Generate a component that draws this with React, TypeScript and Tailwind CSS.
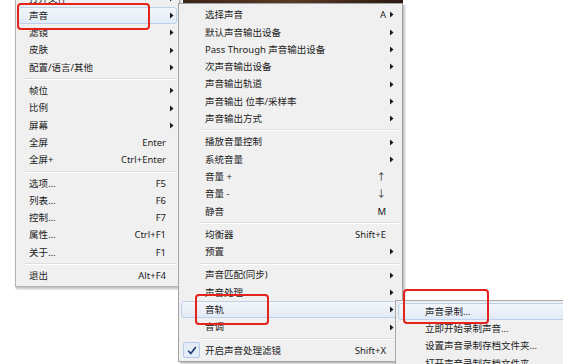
type Item =
  | { sep: true }
  | { sep?: false; label: string; keys?: string; sub?: boolean; hot?: boolean; checked?: boolean }

const mainMenu: Item[] = [
  { label: '打开文件', sub: true },
  { label: '声音', sub: true, hot: true },
  { label: '滤镜', sub: true },
  { label: '皮肤', sub: true },
  { label: '配置/语言/其他', sub: true },
  { sep: true },
  { label: '帧位', sub: true },
  { label: '比例', sub: true },
  { label: '屏幕', sub: true },
  { label: '全屏', keys: 'Enter' },
  { label: '全屏+', keys: 'Ctrl+Enter' },
  { sep: true },
  { label: '选项...', keys: 'F5' },
  { label: '列表...', keys: 'F6' },
  { label: '控制...', keys: 'F7' },
  { label: '属性...', keys: 'Ctrl+F1' },
  { label: '关于...', keys: 'F1' },
  { sep: true },
  { label: '退出', keys: 'Alt+F4' },
]

const soundMenu: Item[] = [
  { label: '选择声音', keys: 'A', sub: true },
  { label: '默认声音输出设备', sub: true },
  { label: 'Pass Through 声音输出设备', sub: true },
  { label: '次声音输出设备', sub: true },
  { label: '声音输出轨道', sub: true },
  { label: '声音输出 位率/采样率', sub: true },
  { label: '声音输出方式', sub: true },
  { sep: true },
  { label: '播放音量控制', sub: true },
  { label: '系统音量', sub: true },
  { label: '音量 +', keys: '↑' },
  { label: '音量 -', keys: '↓' },
  { label: '静音', keys: 'M' },
  { sep: true },
  { label: '均衡器', keys: 'Shift+E' },
  { label: '预置', sub: true },
  { sep: true },
  { label: '声音匹配(同步)', sub: true },
  { label: '声音处理', sub: true },
  { label: '音轨', sub: true, hot: true },
  { label: '音调', sub: true },
  { sep: true },
  { label: '开启声音处理滤镜', keys: 'Shift+X', checked: true },
]

const recordMenu: Item[] = [
  { label: '声音录制...', hot: true },
  { label: '立即开始录制声音...' },
  { label: '设置声音录制存档文件夹...' },
  { label: '打开声音录制存档文件夹...' },
]

function Arrow() {
  return (
    <svg width="4" height="7" viewBox="0 0 4 7" className="block">
      <polygon points="0,0.5 3.5,3.5 0,6.5" fill="#1a1a1a" />
    </svg>
  )
}

function Check() {
  return (
    <div className="flex h-[16px] w-[17px] items-center justify-center rounded-[2px] border border-[#b3cbe6] bg-[#e3ecf7]">
      <svg width="10" height="9" viewBox="0 0 10 9">
        <path d="M1.2 4.8 L3.8 7.6 L8.8 1" stroke="#1c3b73" strokeWidth="1.6" fill="none" />
      </svg>
    </div>
  )
}

function Menu({ items, gutter, sepInset, trail }: { items: Item[]; gutter: number; sepInset: number; trail: string }) {
  return (
    <div className="flex flex-col">
      {items.map((item, i) =>
        item.sep ? (
          <div key={i} className="flex h-[6px] items-center pr-[1px]" style={{ paddingLeft: sepInset }}>
            <div className="h-[2px] w-full border-t border-b border-t-[#dedede] border-b-white" />
          </div>
        ) : (
          <div
            key={i}
            className={
              'flex h-[17.3px] items-center rounded-[3px] border ' +
              (item.hot
                ? 'border-[#bcd2ec] bg-gradient-to-b from-[#f3f7fc] to-[#e2eaf5]'
                : 'border-transparent')
            }
          >
            <div className="flex shrink-0 items-center justify-start pl-[1px]" style={{ width: gutter - 1 }}>
              {item.checked && <Check />}
            </div>
            <span className="flex-1 whitespace-nowrap leading-none">{item.label}</span>
            {item.keys && <span className="whitespace-nowrap leading-none">{item.keys}</span>}
            <div className={'flex shrink-0 items-center justify-center ' + trail}>{item.sub && <Arrow />}</div>
          </div>
        )
      )}
    </div>
  )
}

export default function App() {
  return (
    <div className="relative h-[364px] w-[563px] overflow-hidden bg-white font-['Noto_Sans','Noto_Sans_CJK_SC',sans-serif] text-[9.5px] text-[#1c1c1c]">
      {/* video strip behind the menus */}
      <div className="absolute left-[183px] top-0 h-[4px] w-[220px] bg-gradient-to-r from-[#3b2418] via-[#5a3a26] to-[#2a1a12]" />

      {/* main context menu */}
      <div className="absolute left-[15px] top-[-14.3px] z-10 w-[165px] border border-[#b4b4b4] bg-[#f0f0f0] px-[2px] pb-[2px] pt-[3px] shadow-[1px_2px_2px_rgba(0,0,0,0.25)]">
        <Menu items={mainMenu} gutter={11} sepInset={7} trail="w-[11px] mr-[-1px]" />
      </div>

      {/* sound submenu */}
      <div className="absolute left-[178px] top-[3.35px] z-20 w-[225px] border border-[#a2a2a2] bg-[#f0f0f0] p-[2px] shadow-[2px_2px_2px_rgba(0,0,0,0.25)]">
        <Menu items={soundMenu} gutter={24} sepInset={19} trail="w-[11px] mr-[2px]" />
      </div>

      {/* track submenu */}
      <div className="absolute left-[395px] top-[300px] z-20 w-[220px] border border-[#a8a8a8] bg-[#f0f0f0] p-[2px]">
        <Menu items={recordMenu} gutter={27} sepInset={22} trail="w-[11px]" />
      </div>

      {/* red annotation boxes */}
      <div className="absolute left-[17px] top-[3px] z-30 h-[27px] w-[133px] rounded-[4px] border-2 border-[#e3241c]" />
      <div className="absolute left-[195px] top-[294px] z-30 h-[31px] w-[74px] rounded-[4px] border-2 border-[#e3241c]" />
      <div className="absolute left-[403px] top-[289px] z-30 h-[35px] w-[86px] rounded-[4px] border-2 border-[#e3241c]" />
    </div>
  )
}
